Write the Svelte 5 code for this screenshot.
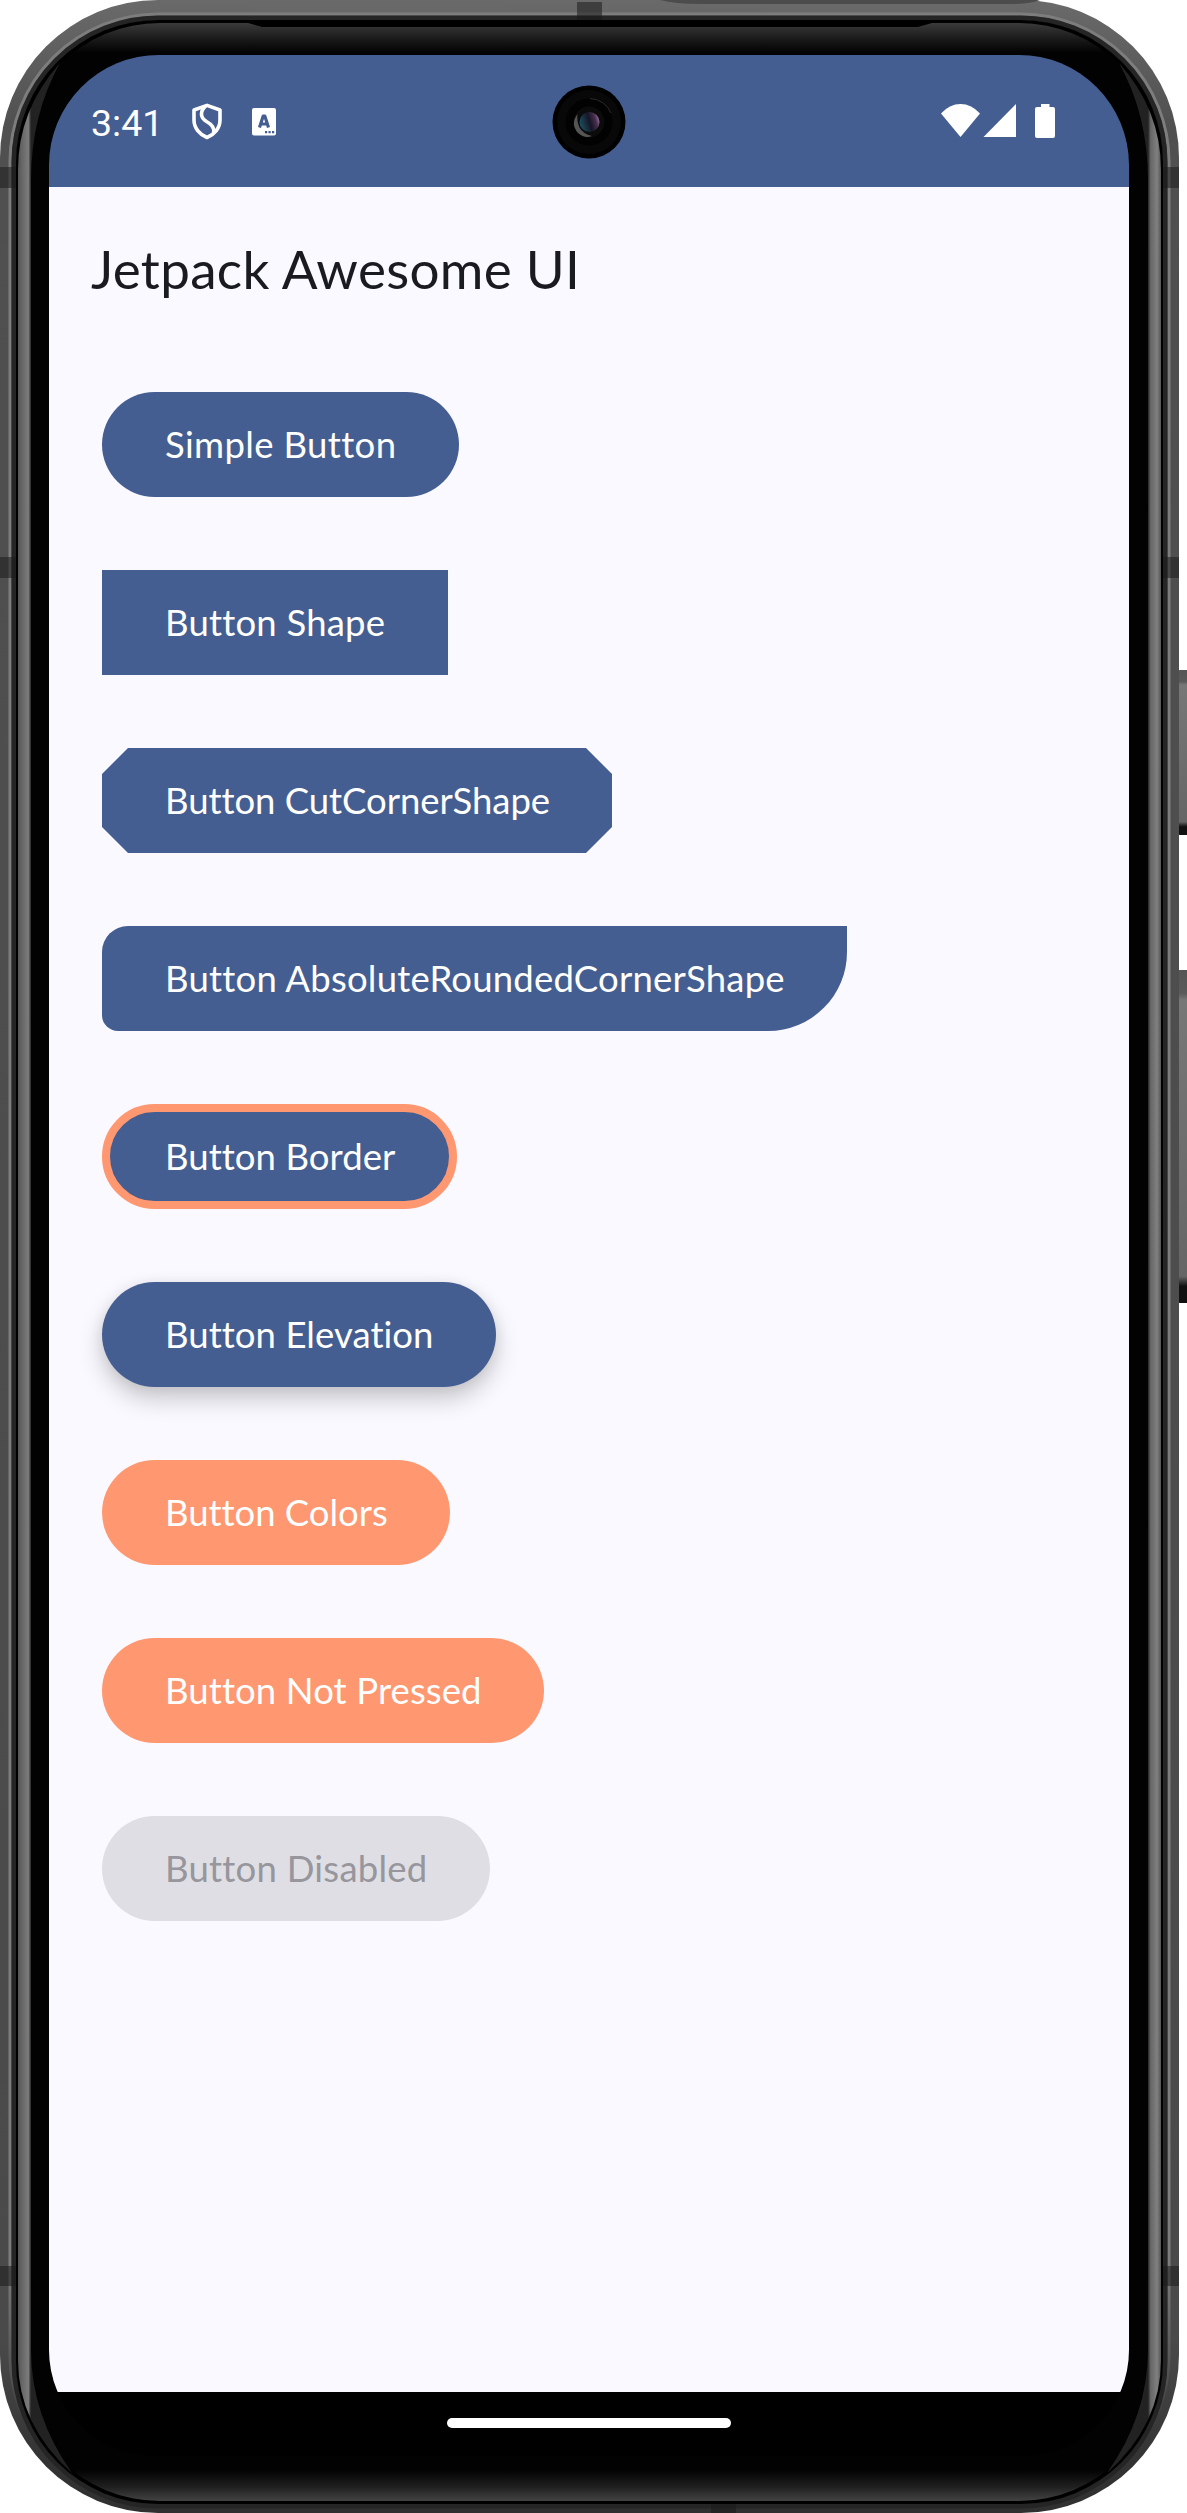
<script>
  const buttons = [
    { label: 'Simple Button', kind: 'pill', width: 357, spacing: 0.35 },
    { label: 'Button Shape', kind: 'square', width: 346, spacing: 0.2 },
    { label: 'Button CutCornerShape', kind: 'cut', width: 510, spacing: -0.05 },
    { label: 'Button AbsoluteRoundedCornerShape', kind: 'absolute', width: 745, spacing: 0.22 },
    { label: 'Button Border', kind: 'border', width: 355, spacing: 0.05 },
    { label: 'Button Elevation', kind: 'elevated', width: 394, spacing: 0.05 },
    { label: 'Button Colors', kind: 'coral', width: 348, spacing: -0.03 },
    { label: 'Button Not Pressed', kind: 'coral', width: 442, spacing: 0.1 },
    { label: 'Button Disabled', kind: 'disabled', width: 388, spacing: 0.24 }
  ];
</script>

<main class="device">
  <svg class="frame" width="1187" height="2513" viewBox="0 0 1187 2513" aria-hidden="true">
    <defs>
      <linearGradient id="metal" x1="0" y1="0" x2="0" y2="2513" gradientUnits="userSpaceOnUse">
        <stop offset="0" stop-color="#6a6a6a" />
        <stop offset="0.05" stop-color="#505050" />
        <stop offset="0.93" stop-color="#4a4a4a" />
        <stop offset="0.98" stop-color="#333" />
        <stop offset="1" stop-color="#303030" />
      </linearGradient>
      <linearGradient id="highlight" x1="0" y1="0" x2="0" y2="2513" gradientUnits="userSpaceOnUse">
        <stop offset="0" stop-color="#7d7d7d" />
        <stop offset="0.9" stop-color="#7d7d7d" />
        <stop offset="0.97" stop-color="#3a3a3a" />
        <stop offset="1" stop-color="#333" />
      </linearGradient>
      <linearGradient id="glass" x1="0" y1="23" x2="0" y2="2502" gradientUnits="userSpaceOnUse">
        <stop offset="0" stop-color="#3a3a3a" />
        <stop offset="0.006" stop-color="#1c1c1c" />
        <stop offset="0.012" stop-color="#020202" />
        <stop offset="0.987" stop-color="#020202" />
        <stop offset="0.994" stop-color="#202020" />
        <stop offset="1" stop-color="#454545" />
      </linearGradient>
      <linearGradient id="edgeL" x1="18" y1="0" x2="31" y2="0" gradientUnits="userSpaceOnUse">
        <stop offset="0" stop-color="#555" />
        <stop offset="0.3" stop-color="#666" />
        <stop offset="0.8" stop-color="#7c7c7c" />
        <stop offset="1" stop-color="#222" />
      </linearGradient>
      <linearGradient id="edgeR" x1="1161" y1="0" x2="1148" y2="0" gradientUnits="userSpaceOnUse">
        <stop offset="0" stop-color="#555" />
        <stop offset="0.3" stop-color="#808080" />
        <stop offset="0.8" stop-color="#666" />
        <stop offset="1" stop-color="#222" />
      </linearGradient>
      <linearGradient id="key" x1="0" y1="0" x2="0" y2="1">
        <stop offset="0" stop-color="#555" />
        <stop offset="0.07" stop-color="#5a5a5a" />
        <stop offset="0.09" stop-color="#777" />
        <stop offset="0.92" stop-color="#666" />
        <stop offset="0.95" stop-color="#111" />
        <stop offset="1" stop-color="#111" />
      </linearGradient>
    </defs>

    <rect x="1177" y="670" width="14" height="165" rx="3" fill="url(#key)" />
    <rect x="1177" y="970" width="14" height="333" rx="3" fill="url(#key)" />

    <rect x="0" y="0" width="1179" height="2513" rx="158" fill="url(#metal)" />
    <path d="M660 0Q675 4 700 4H1010Q1030 4 1040 0Z" fill="#4c4c4c" />
    <rect x="10" y="14" width="1159" height="2490" rx="148" fill="none" stroke="url(#highlight)" stroke-width="3" />
    <rect x="14" y="18" width="1151" height="2488" rx="144" fill="none" stroke="#252525" stroke-width="5" />
    <rect x="16" y="20" width="1147" height="2484" rx="142" fill="#000" />
    <path d="M160 23H248L262 27H918L932 23H1019A142 142 0 0 1 1161 165V2359A142 142 0 0 1 1019 2501H160A142 142 0 0 1 18 2359V165A142 142 0 0 1 160 23Z" fill="url(#glass)" />

    <path d="M60 63Q18 110 18 170V2360Q18 2425 72 2473Q31 2415 31 2350V180Q31 115 60 63Z" fill="url(#edgeL)" />
    <path d="M1119 63Q1161 110 1161 170V2360Q1161 2425 1107 2473Q1148 2415 1148 2350V180Q1148 115 1119 63Z" fill="url(#edgeR)" />

    <g fill="#1c1c1c" fill-opacity="0.55">
      <rect x="0" y="167" width="16" height="21" />
      <rect x="1163" y="167" width="16" height="21" />
      <rect x="0" y="557" width="16" height="21" />
      <rect x="1163" y="557" width="16" height="21" />
      <rect x="0" y="2266" width="16" height="20" />
      <rect x="1163" y="2266" width="16" height="20" />
      <rect x="577" y="2" width="25" height="18" />
      <rect x="711" y="2504" width="25" height="9" />
    </g>
  </svg>

  <div class="screen">
    <header class="status">
      <div class="group">
        <span class="time">3:41</span>
        <svg class="shield" width="32" height="37" viewBox="0 0 32 37" fill="none" stroke="#fff" stroke-width="3.6" stroke-linejoin="round">
          <path d="M16 2.4 29 7V17C29 25 23.500 31.500 16 34.500C8.500 31.500 3 25 3 17V7Z" />
          <path d="M14.500 3C8.500 9 9.500 15 15.500 18.500C21 21.500 24 25 22.500 30" />
        </svg>
        <svg class="app" width="24" height="28" viewBox="0 0 24 28">
          <rect width="24" height="27.500" rx="2" fill="#fff" />
          <path d="M7.500 19.500 11.200 8H12.800L16.500 19.500M9 16H15" fill="none" stroke="#455e91" stroke-width="3.200" stroke-linejoin="round" />
          <path d="M13 23h2.200v2.200H13zM16.500 23h2.200v2.200h-2.200zM20 23h2.200v2.200H20z" fill="#455e91" />
        </svg>
      </div>
      <svg class="camera" width="74" height="74" viewBox="0 0 74 74" aria-hidden="true">
        <defs>
          <linearGradient id="lens" x1="0" y1="0.600" x2="1" y2="0.300">
            <stop offset="0" stop-color="#1d5061" />
            <stop offset="0.5" stop-color="#161526" />
            <stop offset="0.8" stop-color="#49304f" />
            <stop offset="1" stop-color="#a678ac" />
          </linearGradient>
        </defs>
        <circle cx="37" cy="37" r="36.500" fill="#000" />
        <circle cx="37" cy="37" r="32" fill="#080808" />
        <circle cx="37" cy="37" r="23.500" fill="#020202" />
        <path d="M38 13.500A23.500 23.500 0 0 1 59 28" fill="none" stroke="#2a2a2a" stroke-width="1" />
        <circle cx="37" cy="37" r="15.500" fill="#0b0b0b" />
        <path d="M25.500 29Q18 39 26 48Q33 54 40 51Q31 49 27.500 42.500Q24.500 36 25.500 29Z" fill="#555" />
        <circle cx="37.500" cy="37" r="10" fill="url(#lens)" />
      </svg>
      <svg class="signals" width="114" height="34" viewBox="0 0 114 34" fill="#fff">
        <path d="M0 9.500Q8.500 0 19.500 0T39 9.500L19.500 33Z" />
        <path d="M75 0V33H42.500Z" />
        <path d="M100 0h8.500v3h3.500a2 2 0 0 1 2 2v27a2 2 0 0 1-2 2H96a2 2 0 0 1-2-2V5a2 2 0 0 1 2-2h4z" />
      </svg>
    </header>

    <section class="content">
      <h1>Jetpack Awesome UI</h1>
      <div class="list">
        {#each buttons as b}
          <button class={b.kind} disabled={b.kind === 'disabled'} style:width="{b.width}px">
            <span style:letter-spacing="{b.spacing}px">{b.label}</span>
          </button>
        {/each}
      </div>
    </section>

    <footer class="nav"><i></i></footer>
  </div>
</main>

<style>
  :global(body) {
    margin: 0;
    background: #fff;
  }
  .device {
    display: grid;
    width: 1187px;
    height: 2513px;
    overflow: hidden;
  }
  .frame,
  .screen {
    grid-area: 1 / 1;
  }
  .frame {
    display: block;
  }
  .screen {
    box-sizing: border-box;
    width: 1080px;
    height: 2401px;
    margin: 55px 0 0 49px;
    border-radius: 110px 110px 106px 106px;
    overflow: hidden;
    background: #000;
    display: flex;
    flex-direction: column;
    font-family: Lato, 'Open Sans', sans-serif;
  }
  .status {
    box-sizing: border-box;
    height: 132px;
    flex: none;
    display: grid;
    grid-template-columns: 1fr 74px 1fr;
    align-items: center;
    padding: 0 74px 0 42px;
    background: #455e91;
    color: #fff;
  }
  .group {
    display: flex;
    align-items: center;
  }
  .time {
    width: 99px;
    font: 400 37.5px/44px Roboto, sans-serif;
    margin-top: 4px;
  }
  .shield {
    margin-left: 1px;
    margin-top: 1px;
  }
  .app {
    margin-left: 29px;
    margin-top: 1px;
  }
  .camera {
    margin-left: 16px;
    margin-top: 1px;
  }
  .signals {
    justify-self: end;
    margin-bottom: 1px;
  }
  .content {
    box-sizing: border-box;
    height: 2205px;
    flex: none;
    padding: 49px 0 0 42px;
    background: #faf9ff;
  }
  h1 {
    margin: 0;
    height: 66px;
    font-size: 53px;
    line-height: 66px;
    font-weight: 400;
    letter-spacing: 0.3px;
    color: #1a1b20;
    white-space: nowrap;
  }
  .list {
    display: flex;
    flex-direction: column;
    align-items: flex-start;
    gap: 73px;
    padding: 90px 0 0 11px;
  }
  button {
    box-sizing: border-box;
    height: 105px;
    padding: 0 0 2px 63px;
    border: 0;
    border-radius: 52.5px;
    background: #455e91;
    color: #fff;
    font: 400 36.5px/52px Lato, 'Open Sans', sans-serif;
    text-align: left;
    white-space: nowrap;
  }
  .square {
    border-radius: 0;
  }
  .cut {
    border-radius: 0;
    clip-path: polygon(26px 0, calc(100% - 26px) 0, 100% 26px, 100% 79px, calc(100% - 26px) 100%, 26px 100%, 0 79px, 0 26px);
  }
  .absolute {
    border-radius: 26px 0 79px 16px;
  }
  .border {
    padding-left: 55px;
    border: 8px solid #ff9770;
  }
  .elevated {
    box-shadow: 0 12px 24px rgba(0, 0, 0, 0.2), 0 2px 14px rgba(0, 0, 0, 0.07);
  }
  .coral {
    background: #ff9770;
  }
  .disabled {
    background: #dfdee4;
    color: #96969c;
  }
  .nav {
    flex: 1;
    display: flex;
    justify-content: center;
  }
  .nav i {
    width: 284px;
    height: 10px;
    margin-top: 26px;
    border-radius: 5px;
    background: #fff;
  }
</style>
